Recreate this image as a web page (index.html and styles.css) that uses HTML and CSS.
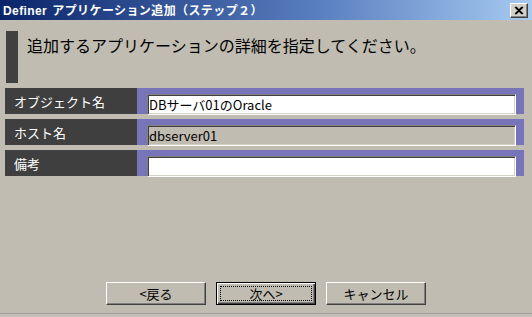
FILE: index.html
```html
<!DOCTYPE html>
<html lang="ja">
<head>
    <meta charset="UTF-8">
    <meta name="viewport" content="width=device-width, initial-scale=1.0">
    <title>Definer アプリケーション追加（ステップ２）</title>
    <link rel="stylesheet" href="styles.css">
</head>
<body>
    <div class="dialog">
        <div class="titlebar">
            <span class="closebox">
                <svg width="10" height="9" viewBox="0 0 10 9">
                    <path d="M1 1 L8 8 M2 1 L9 8 M8 1 L1 8 M9 1 L2 8" stroke="#000" stroke-width="1.2" fill="none"/>
                </svg>
            </span>
            <span class="title"><b>Definer</b> アプリケーション追加（ステップ２）</span>
        </div>

        <div class="main">
            <div class="header">
                <div class="marker"></div>
                <p class="lead">追加するアプリケーションの詳細を指定してください。</p>
            </div>

            <div class="row">
                <label class="label">オブジェクト名</label>
                <div class="field"><input type="text" class="input" value="DBサーバ01のOracle"></div>
            </div>
            <div class="row">
                <label class="label">ホスト名</label>
                <div class="field"><input type="text" class="input readonly" value="dbserver01" readonly></div>
            </div>
            <div class="row">
                <label class="label">備考</label>
                <div class="field"><input type="text" class="input" value=""></div>
            </div>
        </div>

        <div class="actions">
            <button class="btn">&lt;戻る</button>
            <button class="btn default"><span class="focus">次へ&gt;</span></button>
            <button class="btn">キャンセル</button>
        </div>
        <div class="edge"></div>
    </div>
</body>
</html>
```

FILE: styles.css
```css
body {
    margin: 0;
    font-family: "Noto Sans CJK JP", sans-serif;
    background: #c0bcb1;
}
.dialog {
    width: 532px;
    height: 317px;
    display: flex;
    flex-direction: column;
    background: #c0bcb1;
}
.titlebar {
    height: 20px;
    padding: 0 4px 0 3px;
    background-color: #0a246a;
    background-image: linear-gradient(to right, #0a246a, #5a7fc0 60%, #a6caf0);
    color: #fff;
}
.title {
    display: block;
    font-size: 12px;
    font-weight: bold;
    line-height: 20px;
    letter-spacing: 0.4px;
    white-space: nowrap;
}
.title b {
    font-family: "Liberation Sans", sans-serif;
    margin-right: 2px;
}
.closebox {
    float: right;
    box-sizing: border-box;
    width: 18px;
    height: 15px;
    margin-top: 3px;
    display: flex;
    align-items: center;
    justify-content: center;
    background: #d4d0c8;
    border-style: solid;
    border-width: 1px;
    border-color: #fff #404040 #404040 #fff;
    box-shadow: inset -1px -1px #808080;
}
.main {
    padding: 11px 8px 0 5px;
}
.header {
    display: flex;
    height: 52px;
    margin-bottom: 5px;
}
.marker {
    width: 12px;
    margin-left: 1px;
    background: #404040;
}
.lead {
    margin: 3px 0 0 9px;
    font-size: 16px;
    line-height: 22px;
    color: #000;
}
.row {
    display: flex;
    height: 26px;
    margin-bottom: 5px;
}
.label {
    width: 123px;
    padding-left: 9px;
    background: #3f3f3f;
    color: #fff;
    font-size: 13px;
    line-height: 27px;
}
.field {
    flex: 1;
    padding: 3px 8px 2px 10px;
    background: #7774b9;
}
.input {
    box-sizing: border-box;
    width: 100%;
    height: 21px;
    margin: 0;
    padding: 0 1px;
    font-family: "Noto Sans CJK JP", sans-serif;
    font-size: 13px;
    color: #000;
    background: #fff;
    border: 1px solid;
    border-color: #808080 #fff #fff #808080;
    box-shadow: inset 1px 1px #404040, inset -1px -1px #d4d0c8;
    outline: none;
}
.readonly {
    background: #c0bcb1;
}
.actions {
    margin-top: auto;
    display: flex;
    justify-content: center;
    gap: 10px;
    padding-bottom: 8px;
}
.btn {
    box-sizing: border-box;
    width: 100px;
    height: 23px;
    padding: 0;
    font-family: "Noto Sans CJK JP", sans-serif;
    font-size: 13px;
    color: #000;
    background: #c0bcb1;
    border: 1px solid;
    border-color: #fff #404040 #404040 #fff;
    box-shadow: inset -1px -1px #808080;
}
.btn.default {
    border: 1px solid #000;
    box-shadow: inset 1px 1px #fff, inset -1px -1px #404040, inset -2px -2px #808080;
    display: flex;
    align-items: stretch;
    padding: 3px;
}
.focus {
    flex: 1;
    display: flex;
    align-items: center;
    justify-content: center;
    border: 1px dotted #000;
}
.edge {
    height: 3px;
    border-top: 1px solid #a29e94;
    background: #c4c1b8;
}
```
